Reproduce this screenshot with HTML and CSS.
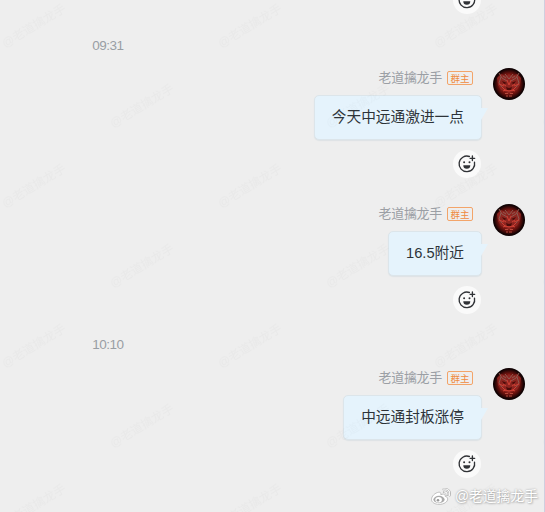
FILE: index.html
```
<!DOCTYPE html>
<html lang="zh-CN">
<head>
    <meta charset="UTF-8">
    <meta name="viewport" content="width=device-width, initial-scale=1.0">
    <title>群聊</title>
    <link rel="stylesheet" href="styles.css">
</head>
<body>
    <!-- shared icons -->
    <svg class="defs" width="0" height="0">
        <symbol id="smile" viewBox="0 0 28 28">
            <path d="M16.4 6.5A7.8 7.8 0 1 0 21.5 12.2" fill="none" stroke="#303236" stroke-width="1.35" stroke-linecap="round"/>
            <path d="M19.4 6v4.6M17.1 8.3h4.6" stroke="#303236" stroke-width="1.35" stroke-linecap="round"/>
            <circle cx="11.1" cy="12.3" r="1" fill="#303236"/>
            <circle cx="16.5" cy="12.3" r="1" fill="#303236"/>
            <path d="M10.3 15.2h7a3.5 3.5 0 0 1-7 0z" fill="#303236"/>
        </symbol>
        <symbol id="dragon" viewBox="0 0 32 32">
            <radialGradient id="glow">
                <stop offset="0" stop-color="#b0201a"/>
                <stop offset="0.7" stop-color="#6e130f"/>
                <stop offset="1" stop-color="#100203"/>
            </radialGradient>
            <circle cx="16" cy="16" r="16" fill="#100203"/>
            <circle cx="16" cy="16" r="15" fill="url(#glow)"/>
            <path d="M4 10l4-4 5 2 3-2 3 2 5-2 4 4-1 7-3 5-5 2-3 2-3-2-5-2-3-5z" fill="#8e2520"/>
            <path d="M6 5l3 5 5 3M26 5l-3 5-5 3M12 6l4 5 4-5M8 9l-2 6 3 4M24 9l2 6-3 4M10 8l3 2M22 8l-3 2" fill="none" stroke="#8d5a51" stroke-width="1"/>
            <path d="M9 13l5 2-3 1zM23 13l-5 2 3 1zM13 19l3 1 3-1-1 3h-4z" fill="#4a0d0a"/>
            <path d="M9 19l3 3 4 1 4-1 3-3M6 16l5 2M26 16l-5 2M14 12l2 5 2-5M10 23l3-1M22 23l-3-1M10 16l3 2M22 16l-3 2" fill="none" stroke="#cf4034" stroke-width="1"/>
            <path d="M12 25.5h3m2 0h3M13 28h2m1 0h3" stroke="#b84a3c" stroke-width="1.2"/>
        </symbol>
    </svg>

    <div class="chat">
        <div class="reaction first"><svg><use href="#smile"/></svg></div>
        <div class="time">09:31</div>

        <div class="message">
            <div class="content">
                <div class="sender"><span class="name">老道擒龙手</span><span class="badge">群主</span></div>
                <div class="bubble">今天中远通激进一点</div>
                <div class="reaction"><svg><use href="#smile"/></svg></div>
            </div>
            <svg class="avatar"><use href="#dragon"/></svg>
        </div>

        <div class="message">
            <div class="content">
                <div class="sender"><span class="name">老道擒龙手</span><span class="badge">群主</span></div>
                <div class="bubble">16.5附近</div>
                <div class="reaction"><svg><use href="#smile"/></svg></div>
            </div>
            <svg class="avatar"><use href="#dragon"/></svg>
        </div>

        <div class="time second">10:10</div>

        <div class="message">
            <div class="content">
                <div class="sender"><span class="name">老道擒龙手</span><span class="badge">群主</span></div>
                <div class="bubble">中远通封板涨停</div>
                <div class="reaction"><svg><use href="#smile"/></svg></div>
            </div>
            <svg class="avatar"><use href="#dragon"/></svg>
        </div>
    </div>

    <!-- repeated watermark over the chat -->
    <svg class="watermark" width="544" height="512">
        <pattern id="marks" width="216" height="160" patternUnits="userSpaceOnUse">
            <text transform="translate(5 48) rotate(-31)">@老道擒龙手</text>
            <text transform="translate(113 128) rotate(-31)">@老道擒龙手</text>
        </pattern>
        <rect width="544" height="512" fill="url(#marks)"/>
    </svg>

    <div class="credit">
        <svg width="22" height="20" viewBox="0 0 22 20">
            <path d="M8.8 5.2c-3.8.5-7.3 4.1-7.3 7.2 0 3 3.4 5 7.6 5 5 0 8.6-2.6 8.6-5.4 0-1.6-1.2-2.4-2.7-2.8.6-1.8-.7-2.8-4.2-1.5.3-1.5-.2-2.7-2-2.5z" fill="#fff" stroke="#aaa" stroke-width=".7"/>
            <ellipse cx="9" cy="12.5" rx="5.6" ry="3.7" fill="#aaa"/>
            <ellipse cx="8.6" cy="12.7" rx="3.3" ry="2.8" fill="#fff"/>
            <circle cx="8" cy="13.2" r="1.3" fill="#999"/>
            <path d="M13.6 2.2c4.2-1 7.2 2.2 6 6.2M14 5c2-.4 3.4 1 2.9 2.9" fill="none" stroke="#aaa" stroke-width="2.2" stroke-linecap="round"/>
            <path d="M13.6 2.2c4.2-1 7.2 2.2 6 6.2M14 5c2-.4 3.4 1 2.9 2.9" fill="none" stroke="#fff" stroke-width="1.2" stroke-linecap="round"/>
        </svg>
        <span>@老道擒龙手</span>
    </div>
</body>
</html>
```
FILE: styles.css
```
* {
    margin: 0;
    padding: 0;
    box-sizing: border-box;
}
body {
    position: relative;
    width: 545px;
    height: 512px;
    overflow: hidden;
    background: #eee;
    font-family: "Liberation Sans", "Noto Sans CJK SC", sans-serif;
}
.defs {
    position: absolute;
}
.chat {
    display: flex;
    flex-direction: column;
    height: 512px;
    border-right: 1px solid #cfcfdf;
}
.reaction {
    width: 28px;
    height: 28px;
    margin: 9px 1px 0 0;
    border-radius: 50%;
    background: #fafafa;
    flex-shrink: 0;
}
.reaction svg {
    display: block;
    width: 28px;
    height: 28px;
}
.reaction.first {
    align-self: flex-end;
    margin: -14px 63px 0 0;
}
.time {
    width: 216px;
    height: 20px;
    margin: 21px 0 13px;
    line-height: 21px;
    text-align: center;
    font-size: 13.5px;
    letter-spacing: -0.5px;
    color: #999ea4;
}
.time.second {
    margin: -6px 0 14px;
}
.message {
    display: flex;
    justify-content: flex-end;
    gap: 11px;
    height: 136px;
    padding-right: 19px;
    flex-shrink: 0;
}
.content {
    display: flex;
    flex-direction: column;
    align-items: flex-end;
}
.sender {
    display: flex;
    align-items: center;
    gap: 5px;
    height: 20px;
    margin: 0 9px 7px 0;
}
.name {
    font-size: 13px;
    line-height: 20px;
    letter-spacing: -0.3px;
    color: #9b9fa5;
}
.badge {
    width: 26px;
    height: 14px;
    border: 1px solid #f3a469;
    border-radius: 2px;
    font-size: 9.5px;
    line-height: 14px;
    text-align: center;
    color: #ef8b40;
}
.bubble {
    position: relative;
    height: 45px;
    margin-bottom: 1px;
    padding: 0 17px;
    border: 1px solid #dce5ea;
    border-radius: 5px;
    background: #e5f3fc;
    box-shadow: 0 1px 1px #dde2e5;
    font-size: 14.7px;
    line-height: 43px;
    color: #2d3339;
}
.bubble::after {
    content: "";
    position: absolute;
    top: 12px;
    right: -7px;
    width: 7px;
    height: 12px;
    background: #e5f3fc;
    clip-path: polygon(0 0, 100% 0, 0 100%);
}
.avatar {
    width: 32px;
    height: 32px;
}
.watermark {
    position: absolute;
    top: 0;
    left: 0;
}
.watermark text {
    font-size: 12px;
    fill: rgba(0, 0, 0, 0.02);
}
.credit {
    position: absolute;
    right: 7px;
    bottom: 5px;
    display: flex;
    align-items: center;
    gap: 3px;
    font-size: 13.8px;
    line-height: 20px;
    color: #fff;
    text-shadow: 0 0 2px #999, 1px 1px 2px #bbb;
}
```
